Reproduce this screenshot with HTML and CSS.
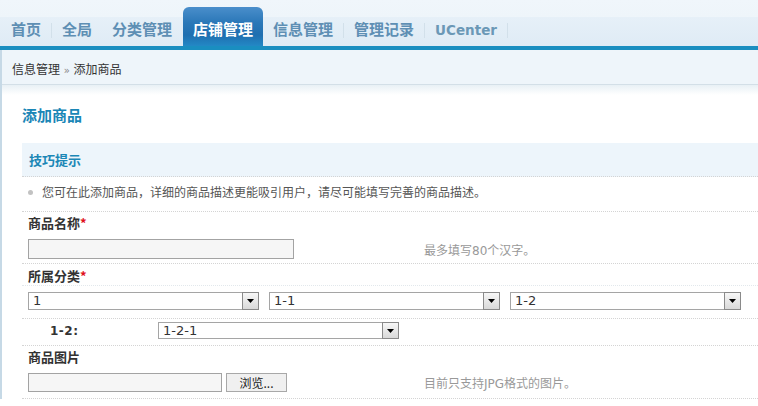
FILE: index.html
```html
<!DOCTYPE html>
<html lang="zh-CN">
<head>
<meta charset="utf-8">
<title>添加商品</title>
<link rel="stylesheet" href="styles.css">
</head>
<body>
<div class="header">
  <nav class="nav">
    <a class="tab">首页</a><i class="sep"></i>
    <a class="tab">全局</a>
    <a class="tab">分类管理</a><i class="sep clear"></i>
    <a class="tab active">店铺管理</a>
    <a class="tab">信息管理</a><i class="sep"></i>
    <a class="tab">管理记录</a><i class="sep"></i>
    <a class="tab"><span class="latin">UCenter</span></a><i class="sep"></i>
  </nav>
</div>
<div class="bar"></div>
<div class="main">
  <div class="crumb">信息管理 <span class="raquo">»</span> 添加商品</div>
  <div class="content">
    <h3 class="title">添加商品</h3>
    <div class="tipshead">技巧提示</div>
    <div class="row tiprow"><i class="dot"></i>您可在此添加商品，详细的商品描述更能吸引用户，请尽可能填写完善的商品描述。</div>

    <div class="label">商品名称<em>*</em></div>
    <div class="row fieldrow">
      <div class="field"><input class="txt name" type="text"></div>
      <div class="hint">最多填写80个汉字。</div>
    </div>

    <div class="label cut">所属分类<em>*</em></div>
    <div class="row selrow">
      <div class="select cat"><span class="val">1</span><span class="arrow"><svg width="7" height="4" viewBox="0 0 7 4"><path d="M0 0h7L3.5 4z" fill="#000"/></svg></span></div>
      <div class="select cat"><span class="val">1-1</span><span class="arrow"><svg width="7" height="4" viewBox="0 0 7 4"><path d="M0 0h7L3.5 4z" fill="#000"/></svg></span></div>
      <div class="select cat"><span class="val">1-2</span><span class="arrow"><svg width="7" height="4" viewBox="0 0 7 4"><path d="M0 0h7L3.5 4z" fill="#000"/></svg></span></div>
    </div>

    <div class="row subrow">
      <span class="sublabel">1-2:</span>
      <div class="select sub"><span class="val">1-2-1</span><span class="arrow"><svg width="7" height="4" viewBox="0 0 7 4"><path d="M0 0h7L3.5 4z" fill="#000"/></svg></span></div>
    </div>

    <div class="label">商品图片</div>
    <div class="row filerow">
      <div class="field file"><input class="txt filetxt" type="text"><button class="browse" type="button">浏览...</button></div>
      <div class="hint">目前只支持JPG格式的图片。</div>
    </div>
  </div>
</div>
</body>
</html>
```
FILE: styles.css
```css
* { box-sizing: border-box; }

body {
  margin: 0;
  background: #fff;
  color: #333;
  font-family: "DejaVu Sans", "Noto Sans CJK SC", sans-serif;
  font-size: 12px;
  overflow: hidden;
}

/* ---------- top navigation ---------- */
.header {
  height: 46px;
  background: linear-gradient(#f0f6fb 0, #eef5fa 17px, #e6f0f8 17px, #dfebf5 46px);
}
.nav {
  display: flex;
  align-items: flex-end;
  height: 100%;
  padding-left: 1px;
}
.tab {
  height: 39px;
  padding: 12px 10px 0;
  line-height: 20px;
  font-family: "Noto Sans CJK SC", sans-serif;
  font-size: 15px;
  font-weight: bold;
  color: #5e8fb4;
  border-radius: 6px 6px 0 0;
  white-space: nowrap;
}
.tab .latin {
  font-family: "DejaVu Sans", sans-serif;
  font-size: 13.5px;
  color: #6b98b6;
}
.tab.active {
  color: #fff;
  background: linear-gradient(#4a8ecb 0%, #2b78b8 40%, #1f6fb0 72%, #2388c5 100%);
}
.sep {
  width: 1px;
  height: 15px;
  margin-bottom: 8px;
  background: #d2e0ea;
}
.sep.clear { background: transparent; }

.bar {
  height: 4px;
  background: #1a8ec0;
}

/* ---------- main area ---------- */
.main {
  border-left: 2px solid #c6d9e6;
}
.crumb {
  height: 35px;
  padding: 12px 0 0 10px;
  line-height: 14px;
  background: #eef5fa;
  border-bottom: 1px solid #d3dfe7;
  color: #333;
  font-family: "Noto Sans CJK SC", sans-serif;
}
.raquo {
  font-family: "DejaVu Sans", sans-serif;
  font-size: 10px;
  color: #888;
  margin: 0 1px;
}

.content {
  padding: 20px 0 0 20px;
  background: linear-gradient(#e8f0f5, #fff 10px);
}
.title {
  margin: 0 0 18px;
  line-height: 20px;
  font-family: "Noto Sans CJK SC", sans-serif;
  font-size: 15px;
  font-weight: bold;
  color: #1a86b6;
}
.tipshead {
  height: 34px;
  line-height: 33px;
  padding-left: 7px;
  background: #edf5fb;
  border-bottom: 1px dotted #d4d4d4;
  font-family: "Noto Sans CJK SC", sans-serif;
  font-size: 13px;
  font-weight: bold;
  color: #1b87b6;
}

.row {
  border-bottom: 1px dotted #d4d4d4;
  padding-left: 6px;
}
.tiprow {
  display: flex;
  align-items: center;
  padding-top: 6px;
  padding-bottom: 10px;
  line-height: 18px;
  color: #555;
  font-family: "Noto Sans CJK SC", sans-serif;
}
.dot {
  width: 5px;
  height: 5px;
  border-radius: 50%;
  background: #c2c2c2;
  margin-right: 9px;
}

.label {
  padding: 2px 0 0 6px;
  line-height: 18px;
  font-family: "Noto Sans CJK SC", sans-serif;
  font-size: 13px;
  font-weight: bold;
  color: #333;
}
.label em {
  font-style: normal;
  color: #e0101a;
}
.label.cut {
  padding-top: 3px;
  border-bottom: 1px dotted #e2e8ec;
}

.fieldrow, .filerow {
  display: flex;
  align-items: center;
  padding-top: 7px;
  padding-bottom: 4px;
}
.filerow { padding-bottom: 6px; }
.field {
  width: 396px;
  flex: none;
}
.hint {
  color: #999;
  font-family: "DejaVu Sans", "Noto Sans CJK SC", sans-serif;
  font-size: 12px;
}
.txt {
  display: block;
  margin: 0;
  padding: 0 3px;
  border: 1px solid #a3a3a3;
  background: #f6f6f6;
  font: 12px "DejaVu Sans", sans-serif;
  outline: none;
}
.txt.name { width: 266px; height: 20px; }
.file {
  display: flex;
  gap: 4px;
}
.txt.filetxt { width: 194px; height: 19px; }
.browse {
  width: 61px;
  height: 19px;
  margin: 0;
  padding: 0;
  border: 1px solid #a8a8a8;
  background: #f0f0f0;
  color: #222;
  font-family: "Noto Sans CJK SC", sans-serif;
  font-size: 12px;
  line-height: 17px;
}

/* ---------- fake selects ---------- */
.selrow {
  display: flex;
  gap: 10px;
  padding-top: 6px;
  padding-bottom: 8px;
}
.select {
  display: flex;
  align-items: stretch;
  border: 1px solid #a5a5a5;
  background: #fff;
}
.select.cat { width: 231px; height: 18px; }
.select.sub { width: 241px; height: 17px; }
.val {
  flex: 1;
  padding-left: 4px;
  font-family: "DejaVu Sans", sans-serif;
  font-size: 13px;
  line-height: 16px;
  color: #333;
}
.select.sub .val { line-height: 15px; }
.arrow {
  width: 17px;
  display: flex;
  align-items: center;
  justify-content: center;
  border: 1px solid #8a8a8a;
  margin: -1px -1px -1px 0;
  background: linear-gradient(#f7f7f7, #d9d9d9);
}

.subrow {
  display: flex;
  align-items: center;
  padding-top: 3px;
  padding-bottom: 6px;
  padding-left: 28px;
}
.sublabel {
  width: 108px;
  font-family: "DejaVu Sans", sans-serif;
  font-weight: bold;
  font-size: 12px;
  letter-spacing: 0.5px;
  color: #333;
}
```
